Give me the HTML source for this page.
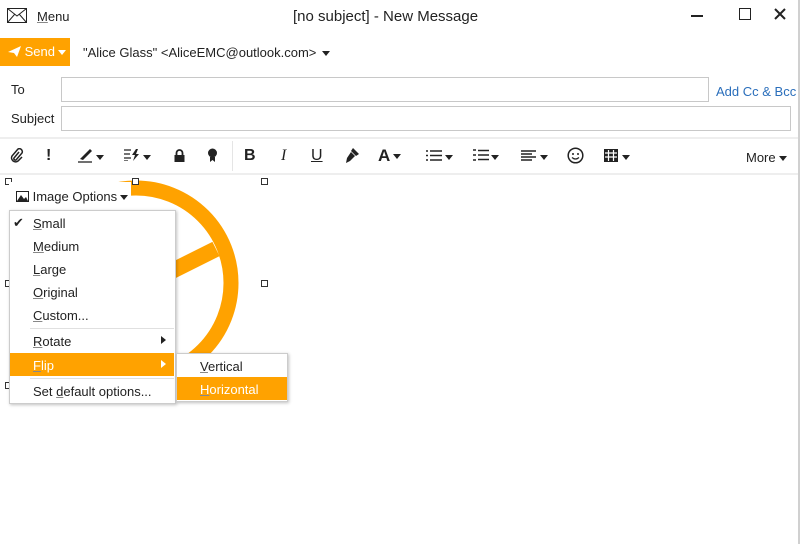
<!DOCTYPE html>
<html><head><style>
*{margin:0;padding:0;box-sizing:border-box}
body{width:800px;height:544px;background:#fff;font-family:"Liberation Sans",sans-serif;font-size:13px;color:#222;position:relative;overflow:hidden}
.a{position:absolute;white-space:nowrap}
.u{text-decoration:underline;text-decoration-color:#888}
.in{position:absolute;border:1px solid #c8c8c8;background:#fff}
.ic{position:absolute;top:147px;height:18px;font-size:16px;font-weight:bold;line-height:18px}
.tri{display:inline-block;width:0;height:0;border-left:4px solid transparent;border-right:4px solid transparent;border-top:5px solid #222;vertical-align:middle;margin-left:3px}
.t2{position:absolute;top:155px;width:0;height:0;border-left:4px solid transparent;border-right:4px solid transparent;border-top:5px solid #222}
.h{position:absolute;width:7px;height:7px;border:1px solid #333;background:#fff}
.mi{position:absolute;left:33px;font-size:13px}
</style></head><body>
<div style="position:absolute;right:0;top:0;width:2px;height:544px;background:#d0d0d0"></div>
<svg class="a" style="left:7px;top:8px" width="20" height="15"><rect x="0.5" y="0.5" width="19" height="14" fill="none" stroke="#222"/><path d="M0.5 0.5L10 8L19.5 0.5M0.5 14.5L7.5 6.5M19.5 14.5L12.5 6.5" fill="none" stroke="#222"/></svg>
<div class="a" style="left:37px;top:9px"><span class="u">M</span>enu</div>
<div class="a" style="left:293px;top:8px;font-size:15px">[no subject] - New Message</div>
<div class="a" style="left:691px;top:15px;width:12px;height:1.5px;background:#222"></div>
<div class="a" style="left:739px;top:8px;width:12px;height:12px;border:1.5px solid #222"></div>
<svg class="a" style="left:774px;top:8px" width="12" height="12"><path d="M1 1L11 11M11 1L1 11" stroke="#222" stroke-width="2"/></svg>
<div class="a" style="left:0;top:38px;width:70px;height:28px;background:#ffa200;color:#fff;line-height:28px;padding-left:8px">
<svg width="13" height="11" style="vertical-align:-1px"><path d="M0 6L13 0L9 11L6 7Z" fill="#fff"/></svg> Send<span class="tri" style="border-top-color:#fff"></span></div>
<div class="a" style="left:83px;top:45px">"Alice Glass" &lt;AliceEMC@outlook.com&gt;<span class="tri" style="margin-left:6px"></span></div>
<div class="a" style="left:11px;top:82px">To</div>
<div class="in" style="left:61px;top:77px;width:648px;height:25px"></div>
<div class="a" style="left:716px;top:84px;color:#2a6ebb">Add Cc &amp; Bcc</div>
<div class="a" style="left:11px;top:111px">Subject</div>
<div class="in" style="left:61px;top:106px;width:730px;height:25px"></div>
<div class="a" style="left:0;top:137px;width:798px;height:2px;background:#eee"></div>
<div class="a" style="left:0;top:173px;width:798px;height:2px;background:#eee"></div>
<div class="a" style="left:232px;top:141px;width:1px;height:30px;background:#e5e5e5"></div>
<svg class="a" style="left:10px;top:148px" width="14" height="15"><path d="M9 4L4 10a1.5 1.5 0 0 0 2 2L12 5a3 3 0 0 0-4-4L2 8a4 4 0 0 0 6 5l4-4" fill="none" stroke="#222" stroke-width="1.5"/></svg>
<div class="ic" style="left:46px">!</div>
<svg class="a" style="left:77px;top:148px" width="16" height="15"><path d="M3 11L13 1l2 2L6 12Z" fill="#222"/><path d="M1 14h14" stroke="#222" stroke-width="1.3"/></svg>
<div class="t2" style="left:96px"></div>
<svg class="a" style="left:124px;top:149px" width="18" height="12"><path d="M0 1h7M0 5h6M0 9h7M0 12h4" stroke="#222" stroke-width="1.3"/><path d="M12 0L8 6h3l-2 6 6-7h-3l2-5Z" fill="#222"/></svg>
<div class="t2" style="left:143px"></div>
<svg class="a" style="left:174px;top:149px" width="11" height="13"><path d="M2.5 6V4a3 3 0 0 1 6 0v2" fill="none" stroke="#222" stroke-width="1.8"/><rect x="0.5" y="6" width="10" height="7" fill="#222"/></svg>
<svg class="a" style="left:207px;top:148px" width="11" height="15"><circle cx="5.5" cy="5" r="4.5" fill="#222"/><path d="M3 9L3 14L5.5 12L8 14L8 9Z" fill="#222"/></svg>
<div class="ic" style="left:244px">B</div>
<div class="ic" style="left:281px;font-style:italic;font-weight:normal;font-family:'Liberation Serif',serif">I</div>
<div class="ic" style="left:311px;text-decoration:underline;font-weight:normal">U</div>
<svg class="a" style="left:344px;top:147px" width="16" height="17"><path d="M9 1l6 6-3 2-5-5Z" fill="#222"/><path d="M7 5l4 4-5 5-4 2 1-5Z" fill="#222"/></svg>
<div class="ic" style="left:378px;font-size:17px">A<span class="tri"></span></div>
<svg class="a" style="left:426px;top:150px" width="16" height="11"><path d="M0 1h2M4 1h12M0 5.5h2M4 5.5h12M0 10h2M4 10h12" stroke="#222" stroke-width="1.6"/></svg><div class="t2" style="left:445px"></div>
<svg class="a" style="left:473px;top:148px" width="16" height="14"><path d="M0 2h3M0 7h3M0 12h3" stroke="#222" stroke-width="1.4"/><path d="M5 2.5h11M5 7h11M5 11.5h11" stroke="#222" stroke-width="1.6"/></svg><div class="t2" style="left:491px"></div>
<svg class="a" style="left:521px;top:150px" width="16" height="11"><path d="M0 1h15M0 4h11M0 7h15M0 10h11" stroke="#222" stroke-width="1.4"/></svg><div class="t2" style="left:540px"></div>
<svg class="a" style="left:567px;top:147px" width="17" height="17"><circle cx="8.5" cy="8.5" r="7.3" fill="none" stroke="#222" stroke-width="1.5"/><circle cx="6" cy="7" r="1" fill="#222"/><circle cx="11" cy="7" r="1" fill="#222"/><path d="M5 10.5q3.5 3 7 0" fill="none" stroke="#222" stroke-width="1.3"/></svg>
<svg class="a" style="left:604px;top:149px" width="14" height="13"><rect x="0" y="0" width="14" height="13" fill="#222"/><path d="M1 4h12M1 8h12M4.5 1v11M9.5 1v11" stroke="#fff" stroke-width="1.2"/></svg><div class="t2" style="left:622px"></div>
<div class="a" style="left:746px;top:150px">More<span class="tri"></span></div>
<svg class="a" style="left:0;top:175px" width="300" height="230"><circle cx="136" cy="108" r="95" fill="none" stroke="#ffa200" stroke-width="15"/><path d="M140 112L216 74" stroke="#ffa200" stroke-width="16"/></svg>
<div class="h" style="left:5px;top:178px"></div><div class="h" style="left:132px;top:178px"></div><div class="h" style="left:261px;top:178px"></div>
<div class="h" style="left:5px;top:280px"></div><div class="h" style="left:261px;top:280px"></div><div class="h" style="left:5px;top:382px"></div>
<div class="a" style="left:9px;top:182px;width:122px;height:28px;background:#fff"></div>
<div class="a" style="left:16px;top:189px;font-size:13px"><svg width="13" height="11" style="vertical-align:-1px"><rect x="0.5" y="0.5" width="12" height="10" fill="none" stroke="#222"/><path d="M1 10L5 4L8 8L10 6L12 10Z" fill="#222"/></svg> Image Options<span class="tri"></span></div>
<div class="a" style="left:9px;top:210px;width:167px;height:194px;background:#fff;border:1px solid #ccc;box-shadow:1px 1px 3px rgba(0,0,0,.25)"></div>
<div class="a" style="left:13px;top:215px">✔</div>
<div class="mi" style="top:216px"><span class="u">S</span>mall</div>
<div class="mi" style="top:239px"><span class="u">M</span>edium</div>
<div class="mi" style="top:262px"><span class="u">L</span>arge</div>
<div class="mi" style="top:285px"><span class="u">O</span>riginal</div>
<div class="mi" style="top:308px"><span class="u">C</span>ustom...</div>
<div class="a" style="left:30px;top:328px;width:144px;height:1px;background:#e0e0e0"></div>
<div class="mi" style="top:334px"><span class="u">R</span>otate</div>
<div class="a" style="left:161px;top:336px;border-top:4px solid transparent;border-bottom:4px solid transparent;border-left:5px solid #222"></div>
<div class="a" style="left:10px;top:353px;width:164px;height:23px;background:#ffa200"></div>
<div class="mi" style="top:358px;color:#fff"><span class="u">F</span>lip</div>
<div class="a" style="left:161px;top:360px;border-top:4px solid transparent;border-bottom:4px solid transparent;border-left:5px solid #fff"></div>
<div class="a" style="left:30px;top:378px;width:144px;height:1px;background:#e0e0e0"></div>
<div class="mi" style="top:384px">Set <span class="u">d</span>efault options...</div>
<div class="a" style="left:176px;top:353px;width:112px;height:49px;background:#fff;border:1px solid #ccc;box-shadow:1px 1px 3px rgba(0,0,0,.25)"></div>
<div class="a" style="left:200px;top:359px;font-size:13px"><span class="u">V</span>ertical</div>
<div class="a" style="left:177px;top:377px;width:110px;height:23px;background:#ffa200"></div>
<div class="a" style="left:200px;top:382px;font-size:13px;color:#fff"><span class="u">H</span>orizontal</div>
</body></html>
